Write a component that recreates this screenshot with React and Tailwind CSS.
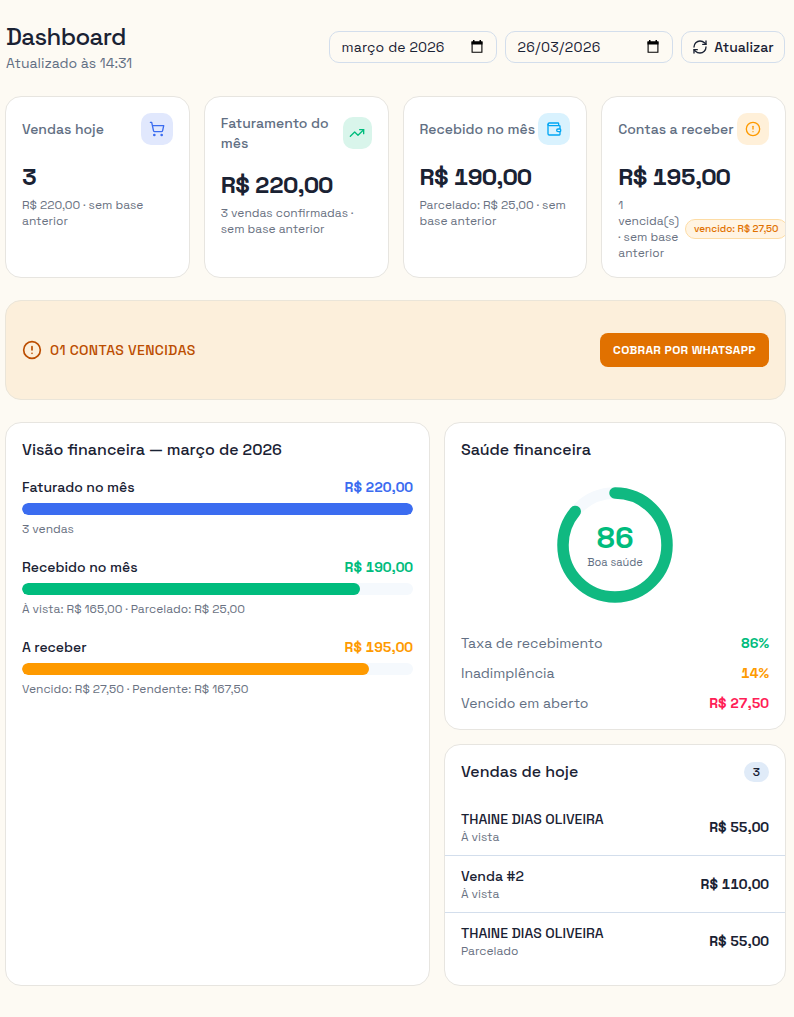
import React from "react";
import {
  CircleAlert,
  RefreshCw,
  ShoppingCart,
  TrendingUp,
  Wallet,
} from "lucide-react";

const stats = [
  {
    title: "Vendas hoje",
    value: "3",
    detail: "R$ 220,00 · sem base anterior",
    icon: ShoppingCart,
    iconClass: "bg-[#e1e8fd] text-[#3b6cf0]",
  },
  {
    title: "Faturamento do mês",
    value: "R$ 220,00",
    detail: "3 vendas confirmadas · sem base anterior",
    icon: TrendingUp,
    iconClass: "bg-[#d9f5eb] text-[#00bc7d]",
  },
  {
    title: "Recebido no mês",
    value: "R$ 190,00",
    detail: "Parcelado: R$ 25,00 · sem base anterior",
    icon: Wallet,
    iconClass: "bg-[#d9f2fe] text-[#00a6f4]",
  },
  {
    title: "Contas a receber",
    value: "R$ 195,00",
    detail: "1 vencida(s) · sem base anterior",
    badge: "vencido: R$ 27,50",
    icon: CircleAlert,
    iconClass: "bg-[#fff0d9] text-[#fe9a00]",
  },
];

const bars = [
  {
    label: "Faturado no mês",
    value: "R$ 220,00",
    detail: "3 vendas",
    percent: 100,
    text: "text-[#3b6cf0]",
    bg: "bg-[#3b6cf0]",
  },
  {
    label: "Recebido no mês",
    value: "R$ 190,00",
    detail: "À vista: R$ 165,00 · Parcelado: R$ 25,00",
    percent: 86.4,
    text: "text-[#00bc7d]",
    bg: "bg-[#00bc7d]",
  },
  {
    label: "A receber",
    value: "R$ 195,00",
    detail: "Vencido: R$ 27,50 · Pendente: R$ 167,50",
    percent: 88.7,
    text: "text-[#fe9a00]",
    bg: "bg-[#fe9a00]",
  },
];

const health = [
  { label: "Taxa de recebimento", value: "86%", color: "text-[#00bc7d]" },
  { label: "Inadimplência", value: "14%", color: "text-[#fe9a00]" },
  { label: "Vencido em aberto", value: "R$ 27,50", color: "text-[#ff2056]" },
];

const sales = [
  { id: 1, name: "THAINE DIAS OLIVEIRA", type: "À vista", value: "R$ 55,00" },
  { id: 2, name: "Venda #2", type: "À vista", value: "R$ 110,00" },
  { id: 3, name: "THAINE DIAS OLIVEIRA", type: "Parcelado", value: "R$ 55,00" },
];

const CalendarIcon = () => (
  <svg width="12" height="13" viewBox="0 0 12 13" fill="none" className="mb-px">
    <path d="M1.1 2h9.8v10.3H1.1z" stroke="#000" strokeWidth="1.1" />
    <path d="M.5 1.5h11V4.5H.5zM2 0h1.5v2H2zM8.5 0H10v2H8.5z" fill="#000" />
  </svg>
);

const DateField = ({ value, className }) => (
  <div className="flex h-8 w-[168px] items-center justify-between rounded-[10px] border border-[#d3deec] pr-[13px] pl-[11.5px] text-sm">
    <span className={className}>{value}</span>
    <CalendarIcon />
  </div>
);

const Card = ({ className = "", children }) => (
  <section
    className={`rounded-2xl border border-[#e7e5e0] bg-white ${className}`}
  >
    {children}
  </section>
);

const StatCard = ({ item }) => {
  const Icon = item.icon;
  return (
    <Card className="overflow-hidden p-4">
      <div className="flex items-center justify-between">
        <h3 className="text-sm font-medium text-[#626f83]">{item.title}</h3>
        <span
          className={`flex h-8 w-8 items-center justify-center rounded-[10px] ${item.iconClass}`}
        >
          <Icon size={16} />
        </span>
      </div>
      <p className="mt-4 text-2xl leading-8 font-bold tracking-tight tabular-nums">
        {item.value}
      </p>
      <div className="mt-1 flex items-center gap-1.5 text-xs text-[#6a7282]">
        <span>{item.detail}</span>
        {item.badge && (
          <span className="flex h-5 shrink-0 items-center rounded-full border border-[#fddca5] bg-[#fff4e3] px-2 text-[10px] font-medium text-[#e17100]">
            {item.badge}
          </span>
        )}
      </div>
    </Card>
  );
};

const HealthRing = ({ score }) => {
  const length = 2 * Math.PI * 52;
  return (
    <div className="mx-auto mt-6 grid h-[120px] w-[120px] place-items-center">
      <svg
        width="120"
        height="120"
        viewBox="0 0 120 120"
        fill="none"
        strokeWidth="11.5"
        className="col-start-1 row-start-1 -rotate-90"
      >
        <circle cx="60" cy="60" r="52" stroke="#f5f9fd" />
        <circle
          cx="60"
          cy="60"
          r="52"
          stroke="#10b981"
          strokeLinecap="round"
          strokeDasharray={`${(length * score) / 100} ${length}`}
        />
      </svg>
      <div className="col-start-1 row-start-1 pb-0.5 text-center">
        <p className="text-[30px] leading-9 font-bold text-[#00bc7d] tabular-nums">
          {score}
        </p>
        <p className="text-[11px] leading-3 text-[#626f83]">Boa saúde</p>
      </div>
    </div>
  );
};

const App = () => {
  return (
    <div className="min-h-screen bg-[#fdfaf3] pt-[21px] pr-2 pb-[31px] pl-[5px] font-['Space_Grotesk','Inter',sans-serif] text-[#1a2233]">
      {/* Header */}
      <header className="flex items-center justify-between pr-px">
        <div className="pl-px">
          <h1 className="text-2xl leading-8 font-medium tracking-tight">
            Dashboard
          </h1>
          <p className="text-sm text-[#626f83]">Atualizado às 14:31</p>
        </div>
        <div className="flex gap-2">
          <DateField value="março de 2026" className="tracking-[0.15px]" />
          <DateField value="26/03/2026" className="tracking-[0.4px]" />
          <button className="flex h-8 w-[104px] items-center justify-center gap-1.5 rounded-[10px] border border-[#d3deec] text-sm font-medium">
            <RefreshCw size={16} />
            Atualizar
          </button>
        </div>
      </header>

      {/* Stats */}
      <div className="mt-[23px] grid grid-cols-4 gap-3.5">
        {stats.map((item) => (
          <StatCard key={item.title} item={item} />
        ))}
      </div>

      {/* Overdue banner */}
      <div className="mt-[22px] flex h-[100px] items-center justify-between rounded-2xl border border-[#eae5d9] bg-[#fcefdb] px-4">
        <div className="flex items-center gap-2 text-sm font-medium tracking-wide text-[#bb4d00]">
          <CircleAlert size={20} />
          01 CONTAS VENCIDAS
        </div>
        <button className="h-[34px] w-[169px] rounded-lg bg-[#e17100] text-xs font-bold tracking-wide whitespace-nowrap text-white">
          COBRAR POR WHATSAPP
        </button>
      </div>

      <div className="mt-[22px] grid grid-cols-[425px_1fr] gap-3.5">
        <Card className="p-4">
          <h2 className="leading-[22px] font-medium">
            Visão financeira — março de 2026
          </h2>
          <div className="mt-4 space-y-5">
            {bars.map((bar) => (
              <div key={bar.label}>
                <div className="flex justify-between text-sm">
                  <span className="font-medium">{bar.label}</span>
                  <span className={`font-bold tabular-nums ${bar.text}`}>
                    {bar.value}
                  </span>
                </div>
                <div className="mt-1.5 h-3 overflow-hidden rounded-full bg-[#f5f9fd]">
                  <div
                    className={`h-full rounded-full ${bar.bg}`}
                    style={{ width: `${bar.percent}%` }}
                  />
                </div>
                <p className="mt-1.5 text-xs text-[#6a7282]">{bar.detail}</p>
              </div>
            ))}
          </div>
        </Card>

        <div className="flex flex-col gap-3.5">
          <Card className="p-4">
            <h2 className="leading-[22px] font-medium">Saúde financeira</h2>
            <HealthRing score={86} />
            <div className="mt-7 space-y-2.5 text-sm">
              {health.map((row) => (
                <div key={row.label} className="flex justify-between">
                  <span className="text-[#626f83]">{row.label}</span>
                  <span className={`font-semibold tabular-nums ${row.color}`}>
                    {row.value}
                  </span>
                </div>
              ))}
            </div>
          </Card>

          <Card className="py-4">
            <div className="flex h-[22px] items-center justify-between px-4">
              <h2 className="font-medium">Vendas de hoje</h2>
              <span className="flex h-5 w-[25px] items-center justify-center rounded-full bg-[#e0ebf8] text-xs font-medium">
                3
              </span>
            </div>
            <ul className="mt-4 divide-y divide-[#d3deec]">
              {sales.map((sale) => (
                <li
                  key={sale.id}
                  className="flex items-center justify-between px-4 py-2.5"
                >
                  <div>
                    <p className="text-sm font-medium">{sale.name}</p>
                    <p className="text-xs text-[#6a7282]">{sale.type}</p>
                  </div>
                  <span className="text-sm font-semibold tabular-nums">
                    {sale.value}
                  </span>
                </li>
              ))}
            </ul>
          </Card>
        </div>
      </div>
    </div>
  );
};

export default App;
